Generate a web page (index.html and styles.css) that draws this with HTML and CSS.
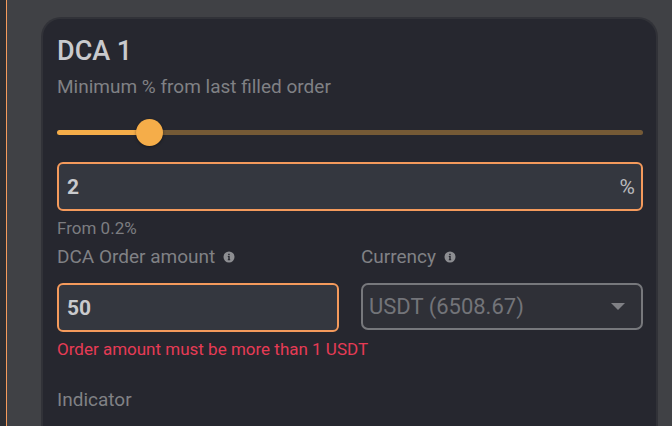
FILE: index.html
```
<!DOCTYPE html>
<html lang="en">
<head>
    <meta charset="utf-8">
    <title>DCA settings</title>
    <link rel="stylesheet" href="styles.css">
</head>
<body>
    <main class="panel">
        <form class="card">
            <h2 class="card-title">DCA 1</h2>
            <label class="label" for="min-percent">Minimum % from last filled order</label>
            <input class="slider" type="range" id="percent-slider" aria-label="Minimum percent" min="0.2" max="13" step="0.1" value="2" style="--fill: 14%">
            <div class="field">
                <input class="field-input" type="text" id="min-percent" value="2">
                <span class="field-unit">%</span>
            </div>
            <p class="hint">From 0.2%</p>

            <div class="row">
                <div class="col">
                    <div class="label-line">
                        <label class="label" for="order-amount">DCA Order amount</label>
                        <svg class="info" viewBox="0 0 12 12" aria-hidden="true">
                            <circle cx="6" cy="6" r="5.5" fill="#8d8e92"/>
                            <path d="M5.2 2.8h1.5v1.4H5.2zM4.8 5h1.9v3.3h.5v.9H4.8v-.9h.5V5.9h-.5z" fill="#26272f"/>
                        </svg>
                    </div>
                    <div class="field">
                        <input class="field-input" type="text" id="order-amount" value="50">
                    </div>
                </div>
                <div class="col">
                    <div class="label-line">
                        <label class="label" for="currency">Currency</label>
                        <svg class="info" viewBox="0 0 12 12" aria-hidden="true">
                            <circle cx="6" cy="6" r="5.5" fill="#8d8e92"/>
                            <path d="M5.2 2.8h1.5v1.4H5.2zM4.8 5h1.9v3.3h.5v.9H4.8v-.9h.5V5.9h-.5z" fill="#26272f"/>
                        </svg>
                    </div>
                    <div class="select-box">
                        <select class="select" id="currency" disabled>
                            <option>USDT (6508.67)</option>
                        </select>
                        <svg class="arrow" viewBox="0 0 14 7" aria-hidden="true">
                            <path d="M0 0h14L7 7z" fill="#808085"/>
                        </svg>
                    </div>
                </div>
            </div>
            <p class="hint error">Order amount must be more than 1 USDT</p>

            <p class="label section-label">Indicator</p>
        </form>
    </main>
</body>
</html>
```

FILE: styles.css
```
* {
    box-sizing: border-box;
}
body {
    margin: 0;
    padding-left: 6px;
    background: #2c2d32;
    font-family: Roboto, "Liberation Sans", sans-serif;
    color: #c9cacd;
}
.panel {
    min-height: 100vh;
    padding: 17px 14px 0 34px;
    border-left: 1px solid #f49a5c;
    background: #404145;
}
.card {
    display: flex;
    flex-direction: column;
    padding: 16px 13px 14px 14px;
    border: 2px solid #313238;
    border-bottom: none;
    border-radius: 20px 20px 0 0;
    background: #26272f;
}
.card-title {
    margin: 0;
    font-size: 27px;
    line-height: 32px;
    font-weight: 500;
}
.label {
    margin: 0;
    font-size: 19px;
    line-height: 24px;
    color: #808185;
}
.card-title + .label {
    margin-top: 8px;
}
.slider {
    appearance: none;
    width: 100%;
    height: 27px;
    margin: 20px 0 16px;
    background: transparent;
}
.slider::-webkit-slider-runnable-track {
    height: 5px;
    border-radius: 3px;
    background: linear-gradient(to right, #f5ad49 var(--fill), #755a36 var(--fill));
}
.slider::-webkit-slider-thumb {
    appearance: none;
    width: 27px;
    height: 27px;
    margin-top: -11px;
    border-radius: 50%;
    background: #f5ad49;
    box-shadow: 0 1px 3px rgba(0, 0, 0, 0.4);
}
.field {
    display: flex;
    align-items: center;
    height: 49px;
    padding: 0 6px 0 8px;
    border: 2px solid #f49a5c;
    border-radius: 6px;
    background: #34373f;
}
.field-input {
    flex: 1;
    min-width: 0;
    padding: 0;
    border: none;
    outline: none;
    background: transparent;
    font: bold 21px Roboto, "Liberation Sans", sans-serif;
    color: #c9cacd;
}
.field-unit {
    font-size: 21px;
    color: #b9babd;
}
.hint {
    margin: 7px 0 0;
    font-size: 17px;
    line-height: 20px;
    color: #7c7d81;
}
.row {
    display: flex;
    align-items: flex-start;
    gap: 22px;
    margin-top: 7px;
}
.col {
    flex: 1;
    min-width: 0;
}
.label-line {
    display: flex;
    align-items: center;
    gap: 8px;
    margin-bottom: 14px;
}
.info {
    width: 12px;
    height: 12px;
}
.select-box {
    display: grid;
    align-items: center;
}
.select,
.arrow {
    grid-area: 1 / 1;
}
.select {
    appearance: none;
    width: 100%;
    height: 47px;
    padding: 0 40px 0 6px;
    border: 2px solid #77787c;
    border-radius: 7px;
    background: #2f3037;
    font: 22px Roboto, "Liberation Sans", sans-serif;
    color: #737479;
    opacity: 1;
}
.arrow {
    justify-self: end;
    width: 14px;
    height: 7px;
    margin-right: 18px;
    pointer-events: none;
}
.error {
    color: #e63b55;
}
.section-label {
    margin-top: 29px;
}
```
